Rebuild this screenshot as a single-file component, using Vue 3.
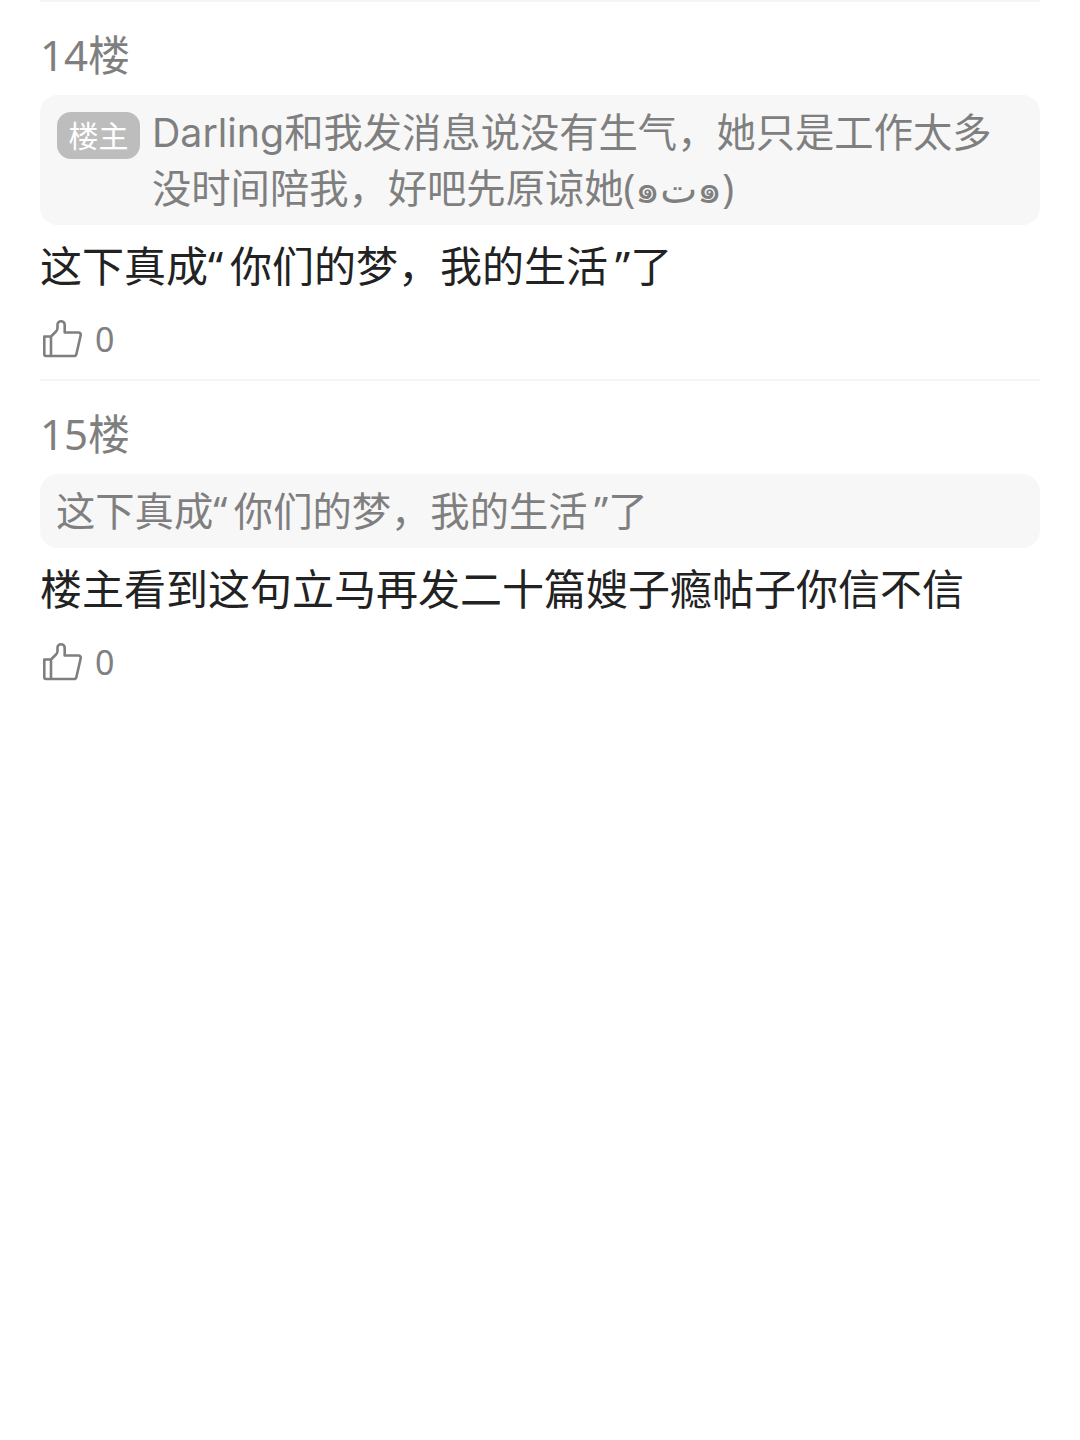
<template>
  <div class="page">
    <div class="reply" v-for="item in replies" :key="item.floor">
      <div class="floor">{{ item.floor }}楼</div>
      <div class="quote">
        <span v-if="item.isOwner" class="owner-tag">楼主</span>
        <div class="quote-text"><span v-if="item.name" class="name">{{ item.name }}</span>{{ item.quote }}</div>
      </div>
      <div class="content">{{ item.content }}</div>
      <div class="like">
        <svg class="like-icon" width="42" height="42" viewBox="0 0 42 42" fill="none">
          <path d="M4.3 18.5H11V38H6C5 38 4.3 37.3 4.3 36.3V18.5Z M11 18.5L16 13.5C17 12.5 17.5 11.5 17.5 10V6.5C17.5 4.5 19 3.3 21 3.3C23 3.3 24.7 4.7 24.7 6.7V14.5H38.5C40 14.5 41 15.8 40.7 17.2L36.4 36C36.2 37.2 35.2 38 34 38H11" stroke="#7f7f7f" stroke-width="2.6" stroke-linejoin="round" stroke-linecap="round" />
        </svg>
        <span class="like-count">{{ item.likes }}</span>
      </div>
    </div>
  </div>
</template>

<script setup>
// 引号旁边留一点空隙，和原图的字距一致
const dream = '这下真成“\u2006你们的梦，我的生活\u2006”了';

const replies = [
  {
    floor: 14,
    isOwner: true,
    name: 'Darling',
    quote: '和我发消息说没有生气，她只是工作太多没时间陪我，好吧先原谅她(๑ت๑)',
    content: dream,
    likes: 0
  },
  {
    floor: 15,
    isOwner: false,
    quote: dream,
    content: '楼主看到这句立马再发二十篇嫂子瘾帖子你信不信',
    likes: 0
  }
];
</script>

<style>
html, body {
  background: #fff;
}
</style>

<style scoped>
.page {
  height: 1440px;
  box-sizing: border-box;
  padding: 0 40px;
  background: #fff;
  font-family: "Noto Sans", "Noto Sans CJK SC", "DejaVu Sans", sans-serif;
}

.reply {
  border-top: 2px solid #f5f5f5;
  height: 377px;
}

.reply + .reply {
  height: auto;
}

.floor {
  margin-top: 26px;
  height: 54px;
  line-height: 54px;
  font-size: 42px;
  color: #7f7f7f;
}

.quote {
  display: flex;
  align-items: flex-start;
  margin-top: 13px;
  padding: 9px 16px;
  background: #f7f7f7;
  border-radius: 18px;
}

.owner-tag {
  flex: none;
  width: 83px;
  height: 47px;
  margin: 8px 12px 0 1px;
  line-height: 47px;
  text-align: center;
  font-size: 30px;
  color: #fff;
  background: #bdbdbd;
  border-radius: 14px;
}

.quote-text {
  font-size: 39.3px;
  line-height: 56px;
  color: #7f7f7f;
}

.name {
  font-family: Inter, "Noto Sans", sans-serif;
  line-height: 1;
}

.content {
  margin-top: 12px;
  font-size: 42px;
  line-height: 58px;
  color: #222;
}

.like {
  display: flex;
  align-items: center;
  margin-top: 23px;
  height: 42px;
}

.like-icon {
  flex: none;
}

.like-count {
  margin-left: 13px;
  font-size: 34px;
  color: #808080;
}
</style>
